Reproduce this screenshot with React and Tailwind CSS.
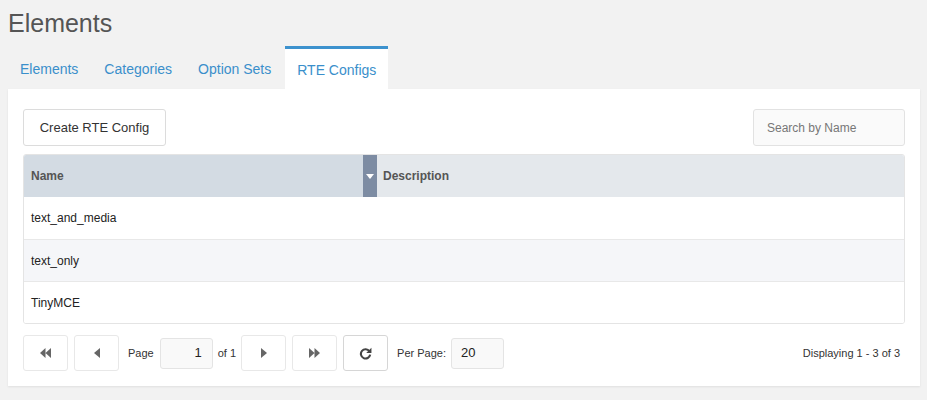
import React from 'react'

const font = { fontFamily: '"Liberation Sans", Arial, sans-serif' }

const TABS = ['Elements', 'Categories', 'Option Sets', 'RTE Configs']
const ROWS = ['text_and_media', 'text_only', 'TinyMCE']

function FastBack() {
  return (
    <svg width="11" height="10" viewBox="0 0 11 10"><path d="M0 5 5.5 0v10zM5.5 5 11 0v10z" fill="#666" /></svg>
  )
}
function FastFwd() {
  return (
    <svg width="11" height="10" viewBox="0 0 11 10"><path d="M11 5 5.5 0v10zM5.5 5 0 0v10z" fill="#666" /></svg>
  )
}
function CaretLeft() {
  return <svg width="6" height="10" viewBox="0 0 6 10"><path d="M6 0 0 5l6 5z" fill="#666" /></svg>
}
function CaretRight() {
  return <svg width="6" height="10" viewBox="0 0 6 10"><path d="M0 0l6 5-6 5z" fill="#666" /></svg>
}
function Repeat() {
  return (
    <svg width="13" height="13" viewBox="0 0 14 14">
      <path d="M11.2 4.6A5 5 0 1 0 12 8.2" fill="none" stroke="#444" strokeWidth="2.3" />
      <path d="M13.4 0.8v5.6H7.8z" fill="#444" />
    </svg>
  )
}

function PagerBtn({ children, dark }) {
  return (
    <button className={`w-[45px] h-[36px] flex items-center justify-center bg-white rounded-[3px] border ${dark ? 'border-[#d6d6d6]' : 'border-[#e8e8e8]'}`}>
      {children}
    </button>
  )
}

export default function App() {
  return (
    <div className="min-h-[400px] bg-[#f2f2f2] px-2 text-[#333]" style={font}>
      <div className="pt-[1px]">
        <h1 className="text-[25px] leading-[45px] text-[#555] font-normal">Elements</h1>
      </div>

      <div className="flex gap-[2px] h-[43px]">
        {TABS.map(t => (
          <div key={t}
            className={`px-3 flex items-center pt-[3px] text-[14px] text-[#3a8fcb] ${t === 'RTE Configs' ? 'bg-white border-t-[3px] border-[#3d92ce] pt-0' : ''}`}>
            {t}
          </div>
        ))}
      </div>

      <div className="w-[912px] bg-white shadow-[0_1px_2px_rgba(0,0,0,0.08)] px-[15px] pt-[20px] pb-[15px]">
        <div className="flex items-center justify-between">
          <button className="h-[37px] w-[143px] border border-[#dcdcdc] rounded-[3px] bg-white text-[13px] text-[#333]">Create RTE Config</button>
          <div className="h-[37px] w-[152px] border border-[#e2e2e2] rounded-[3px] bg-[#fafafa] flex items-center px-[13px] text-[12px] text-[#777]">Search by Name</div>
        </div>

        <div className="mt-[8px] border border-[#e4e4e4] rounded-[3px] overflow-hidden">
          <div className="flex h-[42px] text-[12px] font-bold text-[#555]">
            <div className="w-[339px] bg-[#d3dbe3] flex items-center pl-[7px]">Name</div>
            <div className="w-[14px] bg-[#7d8ca3] flex items-center justify-center">
              <svg width="8" height="5" viewBox="0 0 8 5"><path d="M0 0h8L4 5z" fill="#fff" /></svg>
            </div>
            <div className="flex-1 bg-[#e4e8ec] flex items-center pl-[6px]">Description</div>
          </div>
          {ROWS.map((r, i) => (
            <div key={r} className={`h-[42px] flex items-center pl-[7px] text-[12px] text-[#222] ${i > 0 ? 'border-t border-[#e8e8e8]' : ''} ${i === 1 ? 'bg-[#f5f6f9]' : 'bg-white'}`}>
              {r}
            </div>
          ))}
        </div>

        <div className="mt-[11px] flex items-center h-[36px] text-[11px] text-[#333]">
          <PagerBtn><FastBack /></PagerBtn>
          <div className="ml-[6px]"><PagerBtn><CaretLeft /></PagerBtn></div>
          <span className="ml-[9px]">Page</span>
          <div className="ml-[6px] w-[53px] h-[31px] border border-[#e4e4e4] rounded-[3px] bg-[#f9f9f9] flex items-center justify-end pr-[10px] text-[13px] text-[#222]">1</div>
          <span className="ml-[5px]">of 1</span>
          <div className="ml-[5px]"><PagerBtn><CaretRight /></PagerBtn></div>
          <div className="ml-[6px]"><PagerBtn><FastFwd /></PagerBtn></div>
          <div className="ml-[6px]"><PagerBtn dark><Repeat /></PagerBtn></div>
          <span className="ml-[9px]">Per Page:</span>
          <div className="ml-[5px] w-[53px] h-[31px] border border-[#e4e4e4] rounded-[3px] bg-[#f9f9f9] flex items-center pl-[9px] text-[13px] text-[#222]">20</div>
          <span className="ml-auto pr-[5px]">Displaying 1 - 3 of 3</span>
        </div>
      </div>
    </div>
  )
}
